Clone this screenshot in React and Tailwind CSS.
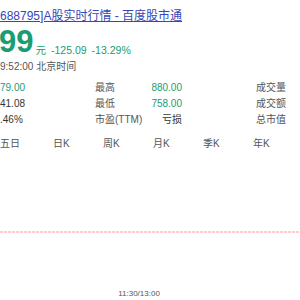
import React from 'react';

const rows = [
   { v: '79.00', vc: 'text-[#1b9c72]', l: '最高', v2: '880.00', l2: '成交量' },
   { v: '41.08', vc: 'text-[#333]', l: '最低', v2: '758.00', l2: '成交额' },
   { v: '.46%', vc: 'text-[#333]', l: '市盈(TTM)', v2: '亏损', v2c: 'text-[#333]', l2: '总市值' }
];

const tabs = ['五日', '日K', '周K', '月K', '季K', '年K'];

export default function App() {
   return (
      <div
         className="w-[300px] h-[300px] overflow-hidden bg-white flex flex-col"
         style={{ fontFamily: '"Liberation Sans", "Noto Sans CJK SC", sans-serif' }}
      >
         <a className="pt-[8px] text-[12px] leading-[16px] text-[#3647b8] underline whitespace-nowrap">
            688795]A股实时行情 - 百度股市通
         </a>

         <div className="mt-[4px] flex items-end gap-[2px] whitespace-nowrap text-[#1b9c72]">
            <span className="text-[31px] leading-[28px] font-bold -ml-[1px]">99</span>
            <span className="text-[10.5px] leading-[12px] flex gap-[5px]">
               <span>元</span>
               <span>-125.09</span>
               <span>-13.29%</span>
            </span>
         </div>

         <div className="mt-[4px] text-[10px] leading-[14px] text-[#555] whitespace-nowrap">9:52:00 北京时间</div>

         <div className="mt-[6px] flex flex-col text-[10px] leading-[16px] whitespace-nowrap">
            {rows.map((r) => (
               <div key={r.l} className="flex">
                  <span className={`w-[95px] ${r.vc}`}>{r.v}</span>
                  <span className="w-[60px] text-[#555]">{r.l}</span>
                  <span className={`w-[27px] flex justify-end ${r.v2c ?? 'text-[#1b9c72]'}`}>{r.v2}</span>
                  <span className="ml-[74px] text-[#555]">{r.l2}</span>
               </div>
            ))}
         </div>

         <div className="mt-[8px] flex text-[10px] leading-[16px] text-[#555]">
            {tabs.map((t, i) => (
               <span key={t} className={`shrink-0 ${i === 0 ? 'w-[53px]' : 'w-[50px]'}`}>{t}</span>
            ))}
         </div>

         <div className="mt-[79px] h-[2px] bg-[repeating-linear-gradient(90deg,#fcc_0_3px,transparent_3px_4px)]" />

         <div className="mt-auto pb-[1px] flex justify-center pr-[22px] text-[8px] leading-[10px] text-[#555]">11:30/13:00</div>
      </div>
   );
}
